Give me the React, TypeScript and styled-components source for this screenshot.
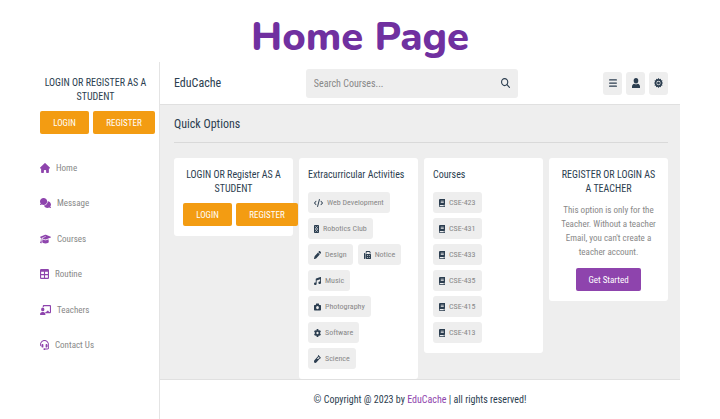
import React from "react";
import styled, { createGlobalStyle } from "styled-components";
import {
  FaBars, FaChalkboardUser, FaCode, FaComments, FaFax, FaGear, FaGraduationCap,
  FaHeadset, FaHouse, FaMagnifyingGlass, FaMusic, FaPen, FaVial,
} from "react-icons/fa6";
import type { IconType } from "react-icons";

const ink = "#2c3e50";
const muted = "#888888";
const purple = "#8e44ad";
const orange = "#f39c12";
const grey = "#eeeeee";

const GlobalStyle = createGlobalStyle`
  *, *::before, *::after { box-sizing: border-box; margin: 0; padding: 0; }
  body { background: #fff; color: ${ink}; font-family: "Roboto Condensed", Roboto, sans-serif; font-size: 9px; }
  button, input { font: inherit; border: 0; }
  a { text-decoration: none; }
  ul { list-style: none; }
  svg { display: block; flex: none; }
`;

const PageTitle = styled.h1`
  height: 62px;
  padding-top: 14px;
  text-align: center;
  font: 800 40px/46px Nunito, "Liberation Sans", sans-serif;
  color: #7030a0;
`;
const Shell = styled.div`
  display: grid;
  grid-template-columns: 120px 1fr;
  margin: 0 40px;
`;
const Sidebar = styled.aside`
  border-right: 1px solid #e4e4e4;
  padding-top: 14px;
`;
const Heading = styled.h3<{ $center?: boolean }>`
  font-size: 10px;
  line-height: 14px;
  font-weight: 400;
  text-align: ${(p) => (p.$center ? "center" : "left")};
`;
const SideHeading = styled(Heading)`
  padding-right: 8px;
`;
const ButtonRow = styled.div`
  display: flex;
  gap: 4px;
  margin-top: 7px;
`;
const Button = styled.button<{ $color?: string; $width: number }>`
  flex: none;
  width: ${(p) => p.$width}px;
  height: 23px;
  border-radius: 2px;
  background: ${(p) => p.$color ?? orange};
  color: #fff;
  cursor: pointer;
`;
const Nav = styled.nav`
  margin-top: 16px;
`;
const NavList = styled.ul`
  display: grid;
  grid-auto-rows: 1fr;
  min-height: 213px;
`;
const NavLink = styled.a`
  display: flex;
  align-items: center;
  gap: 6px;
  height: 100%;
  color: ${muted};
  svg { color: ${purple}; }
`;
const Content = styled.div`
  display: flex;
  flex-direction: column;
  min-width: 0;
`;
const Header = styled.header`
  display: flex;
  align-items: center;
  justify-content: space-between;
  height: 43px;
  padding: 0 12px 0 14px;
  border-bottom: 1px solid #e0e0e0;
`;
const Logo = styled.a`
  color: ${ink};
  font-size: 12px;
`;
const Search = styled.form`
  display: flex;
  align-items: center;
  flex: 0 1 43%;
  height: 29px;
  padding: 0 8px;
  border-radius: 3px;
  background: ${grey};
`;
const SearchInput = styled.input`
  flex: 1;
  min-width: 0;
  background: transparent;
  outline: 0;
  font-size: 10px;
  &::placeholder { color: ${muted}; opacity: 1; }
`;
const SearchButton = styled.button`
  background: transparent;
  color: ${ink};
`;
const Tools = styled.div`
  display: flex;
  gap: 4px;
`;
const ToolButton = styled.button`
  display: grid;
  place-items: center;
  width: 19px;
  height: 23px;
  border-radius: 3px;
  background: ${grey};
  color: ${ink};
`;
const Main = styled.main`
  flex: 1;
  padding: 10px 12px 0 14px;
  background: ${grey};
`;
const SectionTitle = styled.h2`
  margin-bottom: 15px;
  padding-bottom: 9px;
  border-bottom: 1px solid #d9d9d9;
  font-size: 12px;
  line-height: 18px;
  font-weight: 400;
`;
const Cards = styled.div`
  display: grid;
  grid-template-columns: repeat(4, minmax(0, 1fr));
  gap: 6px;
  align-items: start;
`;
const Card = styled.section`
  padding: 10px 9px;
  border-radius: 3px;
  background: #fff;
`;
const TagList = styled.ul<{ $column?: boolean }>`
  display: flex;
  flex-flow: ${(p) => (p.$column ? "column" : "row wrap")};
  align-items: flex-start;
  gap: 5px;
  margin-top: 10px;
`;
const Tag = styled.a`
  display: flex;
  align-items: center;
  gap: 4px;
  height: 21px;
  padding: 0 6px;
  border-radius: 3px;
  background: ${grey};
  color: ${muted};
  font-size: 8px;
  svg { color: ${ink}; }
`;
const TeacherCard = styled(Card)`
  text-align: center;
`;
const Note = styled.p`
  margin: 7px 0 9px;
  line-height: 14px;
  color: ${muted};
`;
const Footer = styled.footer`
  padding: 12px;
  border-top: 1px solid #e0e0e0;
  text-align: center;
  font-size: 10px;
  line-height: 15px;
  a { color: ${purple}; }
`;

type Art = IconType | React.FC<React.SVGProps<SVGSVGElement>>;

const SunIcon: Art = (props: React.SVGProps<SVGSVGElement>) => (
  <svg viewBox="0 0 20 20" fill="currentColor" {...props}>
    <path fillRule="evenodd" d="M10 0l2.200 2.400L15 1.300l.8 3.100 3.100.8L17.600 8 20 10l-2.400 2 1.300 2.800-3.100.8-.8 3.100-2.800-1.100L10 20l-2.200-2.400L5 18.700l-.8-3.100-3.100-.8L2.400 12 0 10l2.400-2L1.100 5.200l3.100-.8L5 1.300l2.800 1.100zM10 5.500a4.500 4.500 0 1 0 0 9 4.500 4.500 0 0 0 0-9z" />
    <circle cx="10" cy="10" r="3.200" />
  </svg>
);
const PersonIcon: Art = (props: React.SVGProps<SVGSVGElement>) => (
  <svg viewBox="0 0 16 20" fill="currentColor" {...props}>
    <ellipse cx="8" cy="5.500" rx="4.600" ry="5.500" />
    <path d="M0 20v-3c0-3 2-5 4.500-5.500 1 .8 2.200 1.200 3.500 1.200s2.500-.4 3.500-1.200C14 12 16 14 16 17v3z" />
  </svg>
);
const TableIcon: Art = (props: React.SVGProps<SVGSVGElement>) => (
  <svg viewBox="0 0 16 16" fill="currentColor" {...props}>
    <path fillRule="evenodd" d="M2 0h12a2 2 0 0 1 2 2v12a2 2 0 0 1-2 2H2a2 2 0 0 1-2-2V2a2 2 0 0 1 2-2zM2 4.500v3.500h5V4.500zm7 0v3.500h5V4.500zM2 10v4h5v-4zm7 0v4h5v-4z" />
  </svg>
);
const RobotIcon: Art = (props: React.SVGProps<SVGSVGElement>) => (
  <svg viewBox="0 0 10 16" {...props}>
    <rect width="10" height="16" rx="1.500" fill="currentColor" />
    <path d="M2.500 2.500L5 5l2.500-2.500M2.500 13.500L5 11l2.500 2.500" fill="none" stroke="#fff" strokeWidth="1.200" />
    <circle cx="5" cy="8" r="2.200" fill="none" stroke="#fff" strokeWidth="1.200" />
  </svg>
);
const CameraIcon: Art = (props: React.SVGProps<SVGSVGElement>) => (
  <svg viewBox="0 0 16 16" fill="currentColor" {...props}>
    <path fillRule="evenodd" d="M5 1h6l1 3h2.500A1.500 1.500 0 0 1 16 5.500v8a1.500 1.500 0 0 1-1.500 1.500h-13A1.500 1.500 0 0 1 0 13.500v-8A1.500 1.500 0 0 1 1.500 4H4zM8 6a3.200 3.200 0 1 0 0 6.400A3.200 3.200 0 0 0 8 6z" />
  </svg>
);
const BookIcon: Art = (props: React.SVGProps<SVGSVGElement>) => (
  <svg viewBox="0 0 12 16" fill="currentColor" {...props}>
    <path fillRule="evenodd" d="M2 0h10v11.500h-1v3h1V16H2a2 2 0 0 1-2-2V2a2 2 0 0 1 2-2zM3.500 3.500V5h6V3.500zm0 3V8h6V6.500zM2.500 12a1.200 1.200 0 0 0 0 2.400H9.500V12z" />
  </svg>
);

interface Item { label: string; icon: Art; w: number }

const Glyph = ({ icon: Icon, w, h = 9 }: { icon: Art; w: number; h?: number }) => (
  <Icon width={w} height={h} preserveAspectRatio="none" aria-hidden />
);

const navItems: Item[] = [
  { label: "Home", icon: FaHouse, w: 10 },
  { label: "Message", icon: FaComments, w: 11 },
  { label: "Courses", icon: FaGraduationCap, w: 11 },
  { label: "Routine", icon: TableIcon, w: 9 },
  { label: "Teachers", icon: FaChalkboardUser, w: 11 },
  { label: "Contact Us", icon: FaHeadset, w: 9 },
];
const activities: Item[] = [
  { label: "Web Development", icon: FaCode, w: 9 },
  { label: "Robotics Club", icon: RobotIcon, w: 5 },
  { label: "Design", icon: FaPen, w: 7 },
  { label: "Notice", icon: FaFax, w: 7 },
  { label: "Music", icon: FaMusic, w: 7 },
  { label: "Photography", icon: CameraIcon, w: 7 },
  { label: "Software", icon: FaGear, w: 7 },
  { label: "Science", icon: FaVial, w: 7 },
];
const courses: Item[] = ["423", "431", "433", "435", "415", "413"].map((n) => ({
  label: `CSE-${n}`, icon: BookIcon, w: 6,
}));

/* react-icons forces its own 1em size through width/height, so the box is set on a wrapper */
const GlyphBox = styled.span<{ $w: number; $h: number }>`
  display: block;
  flex: none;
  width: ${(p) => p.$w}px;
  height: ${(p) => p.$h}px;
  svg { width: 100%; height: 100%; }
`;
const Icon = ({ icon, w, h = 9 }: { icon: Art; w: number; h?: number }) => (
  <GlyphBox $w={w} $h={h}><Glyph icon={icon} w={w} h={h} /></GlyphBox>
);

const Tags = ({ items, column }: { items: Item[]; column?: boolean }) => (
  <TagList $column={column}>
    {items.map((t) => (
      <li key={t.label}>
        <Tag href="#"><Icon icon={t.icon} w={t.w} h={8} />{t.label}</Tag>
      </li>
    ))}
  </TagList>
);

const AuthButtons = () => (
  <ButtonRow>
    <Button $width={49}>LOGIN</Button>
    <Button $width={62}>REGISTER</Button>
  </ButtonRow>
);

export default function App() {
  return (
    <>
      <GlobalStyle />
      <PageTitle>Home Page</PageTitle>
      <Shell>
        <Sidebar>
          <SideHeading $center>LOGIN OR REGISTER AS A STUDENT</SideHeading>
          <AuthButtons />
          <Nav>
            <NavList>
              {navItems.map((n) => (
                <li key={n.label}>
                  <NavLink href="#"><Icon icon={n.icon} w={n.w} h={10} />{n.label}</NavLink>
                </li>
              ))}
            </NavList>
          </Nav>
        </Sidebar>
        <Content>
          <Header>
            <Logo href="#">EduCache</Logo>
            <Search>
              <SearchInput type="text" placeholder="Search Courses..." aria-label="Search courses" />
              <SearchButton type="submit" aria-label="Search"><Icon icon={FaMagnifyingGlass} w={9} h={10} /></SearchButton>
            </Search>
            <Tools>
              <ToolButton aria-label="Menu"><Icon icon={FaBars} w={8} h={10} /></ToolButton>
              <ToolButton aria-label="Profile"><Icon icon={PersonIcon} w={8} h={10} /></ToolButton>
              <ToolButton aria-label="Theme"><Icon icon={SunIcon} w={9} h={10} /></ToolButton>
            </Tools>
          </Header>
          <Main>
            <SectionTitle>Quick Options</SectionTitle>
            <Cards>
              <Card>
                <Heading $center>LOGIN OR Register AS A STUDENT</Heading>
                <AuthButtons />
              </Card>
              <Card>
                <Heading>Extracurricular Activities</Heading>
                <Tags items={activities} />
              </Card>
              <Card>
                <Heading>Courses</Heading>
                <Tags items={courses} column />
              </Card>
              <TeacherCard>
                <Heading $center>REGISTER OR LOGIN AS A TEACHER</Heading>
                <Note>This option is only for the Teacher. Without a teacher Email, you can't create a teacher account.</Note>
                <Button $color={purple} $width={65}>Get Started</Button>
              </TeacherCard>
            </Cards>
          </Main>
          <Footer>
            © Copyright @ 2023 by <a href="#">EduCache</a> | all rights reserved!
          </Footer>
        </Content>
      </Shell>
    </>
  );
}
